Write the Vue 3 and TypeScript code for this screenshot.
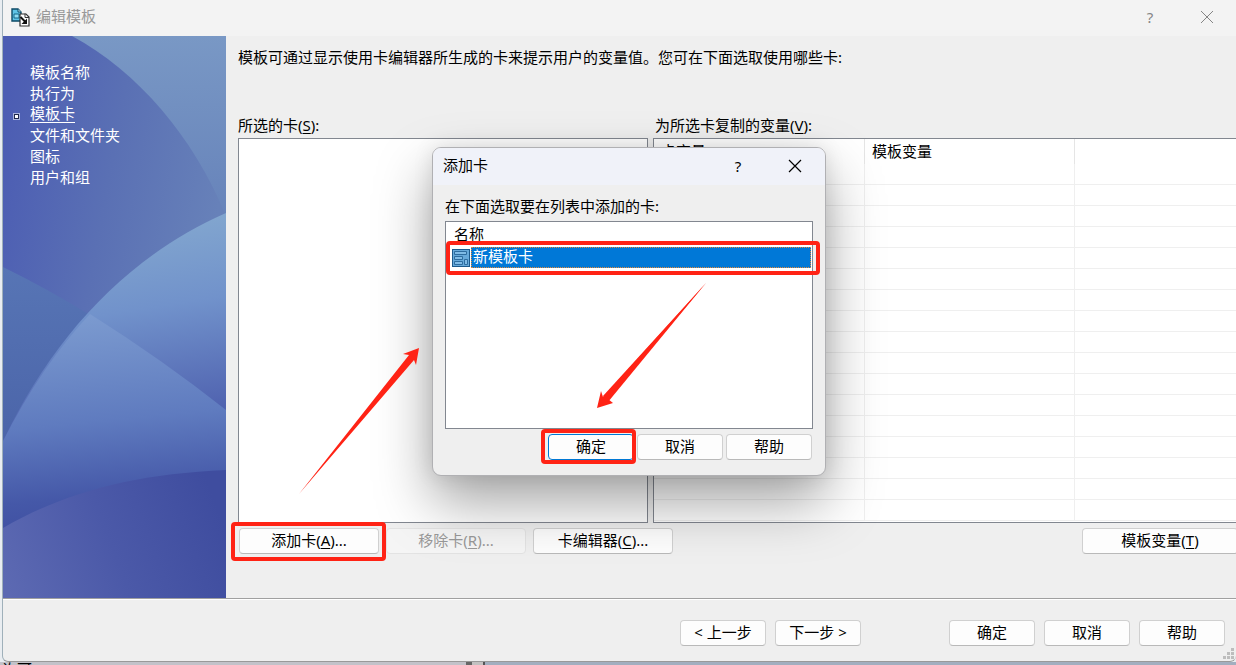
<script setup lang="ts">
interface Step {
  name: string
  current?: boolean
}

const steps: Step[] = [
  { name: '模板名称' },
  { name: '执行为' },
  { name: '模板卡', current: true },
  { name: '文件和文件夹' },
  { name: '图标' },
  { name: '用户和组' },
]

const variableRows = 17
</script>

<template>
  <div class="desktop">
    <section class="window" aria-label="编辑模板">
      <header class="titlebar">
        <svg class="app-icon" width="19" height="19" viewBox="0 0 19 19" aria-hidden="true">
          <path d="M1 1h6l3 3v9H1z" fill="#5fc3e6" stroke="#0d4a66" stroke-width="1.4" />
          <path d="M7 1v3h3" fill="#c9eefa" stroke="#0d4a66" />
          <path d="M3 6h5v4H3z" fill="#8fdcf2" stroke="#15678a" />
          <path d="M9 6h6l3 3v9H9z" fill="#fff" stroke="#333" stroke-width="1.2" />
          <path d="M14 5.500v4h4" fill="none" stroke="#333" />
          <path d="M9.500 9l5 5" stroke="#111" stroke-width="2" />
          <path d="M16 10.500V16h-5.500z" fill="#111" />
        </svg>
        <h1 class="title">编辑模板</h1>
        <button class="chrome" type="button" aria-label="帮助">?</button>
        <button class="chrome" type="button" aria-label="关闭">
          <svg width="14" height="14" viewBox="0 0 14 14"><path d="M1 1l12 12M13 1L1 13" stroke="currentColor" fill="none" /></svg>
        </button>
      </header>

      <div class="main">
        <nav class="sidebar">
          <svg class="art" viewBox="0 0 223 562" preserveAspectRatio="none" aria-hidden="true">
            <defs>
              <linearGradient id="sky" x1="0" y1="0" x2="0" y2="1">
                <stop offset="0" stop-color="#7998c5" />
                <stop offset="0.350" stop-color="#6581b9" />
              </linearGradient>
              <linearGradient id="disc" gradientUnits="userSpaceOnUse" x1="0" y1="90" x2="223" y2="130">
                <stop offset="0" stop-color="#4c5db3" />
                <stop offset="0.500" stop-color="#5a70b4" />
                <stop offset="1" stop-color="#6781b9" />
              </linearGradient>
              <linearGradient id="wedge" x1="0" y1="0" x2="0" y2="1">
                <stop offset="0" stop-color="#5775b5" />
                <stop offset="1" stop-color="#4a63a8" />
              </linearGradient>
              <linearGradient id="hill" gradientUnits="userSpaceOnUse" x1="160" y1="180" x2="190" y2="375">
                <stop offset="0" stop-color="#83a7cf" />
                <stop offset="0.450" stop-color="#7192cb" />
                <stop offset="1" stop-color="#5063b0" />
              </linearGradient>
              <linearGradient id="slope" gradientUnits="userSpaceOnUse" x1="90" y1="280" x2="110" y2="490">
                <stop offset="0" stop-color="#7b9acf" />
                <stop offset="0.500" stop-color="#5f7bbf" />
                <stop offset="0.850" stop-color="#4558a8" />
                <stop offset="1" stop-color="#4050a2" />
              </linearGradient>
              <linearGradient id="base" gradientUnits="userSpaceOnUse" x1="0" y1="540" x2="210" y2="460">
                <stop offset="0" stop-color="#5c69b2" />
                <stop offset="0.500" stop-color="#4b59a8" />
                <stop offset="1" stop-color="#3f4d9f" />
              </linearGradient>
            </defs>
            <rect width="223" height="562" fill="url(#sky)" />
            <path d="M0 0h69C135 36 190 100 223 180v222H0z" fill="url(#disc)" />
            <path d="M0 231Q43 252 87 279V420H0z" fill="url(#wedge)" />
            <path d="M223 177C125 220 50 300 0 405v157h223z" fill="url(#hill)" />
            <path d="M87 278Q160 324 223 374v188H0V405Q38 330 87 278z" fill="url(#slope)" />
            <path d="M0 492C60 457 130 438 223 434v128H0z" fill="url(#base)" />
          </svg>
          <ul class="steps">
            <li v-for="step in steps" :key="step.name" :class="{ current: step.current }">
              <a href="#" :aria-current="step.current ? 'step' : undefined">{{ step.name }}</a>
            </li>
          </ul>
        </nav>

        <div class="content">
          <p class="intro">模板可通过显示使用卡编辑器所生成的卡来提示用户的变量值。您可在下面选取使用哪些卡:</p>
          <div class="panes">
            <div class="pane cards">
              <label class="label" for="cards">所选的卡(<u>S</u>):</label>
              <select id="cards" class="box" size="2"></select>
              <div class="actions">
                <span class="marked add"><button class="btn" type="button">添加卡(<u>A</u>)...</button></span>
                <button class="btn" type="button" disabled>移除卡(<u>R</u>)...</button>
                <button class="btn" type="button">卡编辑器(<u>C</u>)...</button>
              </div>
            </div>
            <div class="pane variables">
              <span id="vars" class="label">为所选卡复制的变量(<u>V</u>):</span>
              <div class="box">
                <table class="grid" aria-labelledby="vars">
                  <colgroup><col class="first" /><col class="second" /><col /></colgroup>
                  <thead>
                    <tr><th>卡变量</th><th>模板变量</th><th></th></tr>
                  </thead>
                  <tbody>
                    <tr v-for="row in variableRows" :key="row"><td></td><td></td><td></td></tr>
                  </tbody>
                </table>
              </div>
              <div class="actions end">
                <button class="btn" type="button">模板变量(<u>T</u>)</button>
              </div>
            </div>
          </div>
        </div>
      </div>

      <footer class="footer">
        <div class="group">
          <button class="btn" type="button">&lt; 上一步</button>
          <button class="btn" type="button">下一步 &gt;</button>
        </div>
        <div class="group">
          <button class="btn" type="button">确定</button>
          <button class="btn" type="button">取消</button>
          <button class="btn" type="button">帮助</button>
        </div>
        <svg class="grip" width="12" height="12" viewBox="0 0 12 12" aria-hidden="true">
          <path d="M8 0h3v3H8zM4 4h3v3H4zM8 4h3v3H8zM0 8h3v3H0zM4 8h3v3H4zM8 8h3v3H8z" fill="#bdbdbd" />
        </svg>
      </footer>
    </section>
    <div class="behind">许可</div>

    <section class="dialog" role="dialog" aria-labelledby="dialog-title">
      <header class="dialog-title">
        <h2 id="dialog-title" class="title">添加卡</h2>
        <button class="chrome" type="button" aria-label="帮助">?</button>
        <button class="chrome" type="button" aria-label="关闭">
          <svg width="14" height="14" viewBox="0 0 14 14"><path d="M1 1l12 12M13 1L1 13" stroke="currentColor" fill="none" stroke-width="1.200" /></svg>
        </button>
      </header>
      <div class="dialog-body">
        <p id="pick">在下面选取要在列表中添加的卡:</p>
        <div class="box list">
          <table aria-labelledby="pick">
            <thead>
              <tr><th>名称</th></tr>
            </thead>
            <tbody>
              <tr>
                <td>
                  <div class="marked row">
                    <svg width="18" height="18" viewBox="0 0 18 18" aria-hidden="true">
                      <rect x="0.500" y="0.500" width="17" height="17" fill="#66a9da" stroke="#1c5a8c" />
                      <path d="M2.500 2.500h12v3h-12zM2.500 7.500h8v3h-8zM2.500 12.500h8v3h-8zM12.500 10.500h3v5h-3z" fill="#7fbbe6" stroke="#2d6c9f" />
                    </svg>
                    <span class="name">新模板卡</span>
                  </div>
                </td>
              </tr>
            </tbody>
          </table>
        </div>
        <div class="dialog-actions">
          <span class="marked ok"><button class="btn default" type="button">确定</button></span>
          <button class="btn" type="button">取消</button>
          <button class="btn" type="button">帮助</button>
        </div>
      </div>
      <svg class="arrow down" width="110" height="126" viewBox="0 0 110 126" aria-hidden="true">
        <path d="M109 0L11 116l5 4-16 5 4-17 2 6z" fill="#ff2315" />
        <path d="M109 0L6 113l5 6z" fill="#ff2315" />
      </svg>
    </section>
    <svg class="arrow up" width="122" height="147" viewBox="0 0 122 147" aria-hidden="true">
      <path d="M1 146L111 7l-6-1 16-6-3 17-2-5z" fill="#ff2315" />
    </svg>
  </div>
</template>

<style>
body {
  margin: 0;
}
</style>

<style scoped>
*,
*::before,
*::after {
  box-sizing: border-box;
}

.desktop {
  position: relative;
  display: flex;
  flex-direction: column;
  min-height: 100vh;
  overflow: hidden;
  background: #e9edf1;
  color: #000;
  font: 15px/20px "Noto Sans", "Noto Sans CJK SC", sans-serif;
}

button,
select {
  font: inherit;
  color: inherit;
}

h1,
h2,
p,
ul {
  margin: 0;
  padding: 0;
  font-size: 15px;
  font-weight: 400;
}

.window {
  display: flex;
  flex: 1;
  flex-direction: column;
  margin-left: 2px;
  border-left: 1px solid #9fb0ba;
  border-bottom: 1px solid #999;
  border-radius: 0 0 6px 6px;
  background: #efefef;
}

.titlebar {
  display: flex;
  align-items: center;
  height: 36px;
  padding: 0 8px;
  background: #f3f3f3;
  color: #999;
}

.app-icon {
  margin-bottom: 2px;
}

.title {
  flex: 1;
  padding-bottom: 4px;
}

.titlebar .title {
  margin-left: 6px;
}

.chrome {
  display: flex;
  align-items: center;
  justify-content: center;
  width: 42px;
  height: 36px;
  margin-left: 15px;
  padding: 0 0 2px;
  border: 0;
  background: none;
}

.titlebar .chrome {
  color: #858585;
}

.main {
  display: flex;
  flex: 1;
}

.sidebar {
  position: relative;
  flex: none;
  width: 223px;
}

.art {
  position: absolute;
  inset: 0;
  width: 100%;
  height: 100%;
}

.steps {
  position: relative;
  padding: 25px 0 0 10px;
  list-style: none;
}

.steps li {
  display: flex;
  align-items: center;
  height: 21px;
  padding-left: 17px;
}

.steps .current {
  padding-left: 0;
}

.current::before {
  content: "";
  width: 7px;
  height: 7px;
  margin: 6px 10px 0 0;
  border: 2px solid #20284c;
  outline: 1px solid #a9b3dc;
  outline-offset: -1px;
  background: #fff;
}

.steps a {
  color: #fff;
  text-decoration: none;
}

.steps .current a {
  border-bottom: 1px solid #fff;
  line-height: 18px;
}

.content {
  display: flex;
  flex: 1;
  flex-direction: column;
  gap: 48px;
  min-width: 0;
  padding: 11px 0 44px 12px;
  overflow: hidden;
}

.panes {
  display: flex;
  flex: 1;
  gap: 5px;
}

.pane {
  display: flex;
  flex-direction: column;
}

.cards {
  flex: none;
  width: 410px;
}

.variables {
  flex: 1;
  min-width: 0;
  margin-right: -2px;
}

.variables .label {
  padding-left: 2px;
}

.box {
  border: 1px solid #828790;
  border-radius: 0;
  background: #fff;
}

.pane .box {
  flex: 1;
  margin: 3px 0 5px;
}

.actions {
  display: flex;
  gap: 7px;
  padding-left: 1px;
}

.actions .btn {
  flex: none;
  width: 140px;
}

.actions.end {
  justify-content: flex-end;
}

.actions.end .btn {
  width: 156px;
}

.btn {
  display: block;
  width: 86px;
  height: 26px;
  padding: 0 0 2px;
  border: 1px solid #d0d0d0;
  border-bottom-color: #b9b9b9;
  border-radius: 4px;
  background: #fdfdfd;
  line-height: 20px;
  text-align: center;
  white-space: nowrap;
}

.btn:disabled {
  border-color: #e3e3e3;
  background: #f5f5f5;
  color: #999;
}

.btn.default {
  border-color: #0078d4;
}

u {
  text-decoration: underline;
  text-underline-offset: 2px;
}

table {
  width: 100%;
  border-collapse: separate;
  border-spacing: 0;
  table-layout: fixed;
}

th {
  height: 25px;
  padding: 0 0 2px 8px;
  font-weight: 400;
  text-align: left;
}

.grid th {
  padding-left: 7px;
  border-right: 1px solid #e5e5e5;
}

.grid td {
  height: 21px;
  padding: 0;
  border-right: 1px solid #efefef;
  border-bottom: 1px solid #efefef;
}

.first {
  width: 211px;
}

.second {
  width: 210px;
}

.footer {
  position: relative;
  display: flex;
  justify-content: flex-end;
  gap: 88px;
  padding: 21px 11px 15px 0;
  border-top: 1px solid #a0a0a0;
  box-shadow: inset 0 1px #fff;
}

.group {
  display: flex;
  gap: 9px;
}

.grip {
  position: absolute;
  right: 1px;
  bottom: 1px;
}

.behind {
  height: 3px;
  padding-left: 2px;
  overflow: hidden;
  background: linear-gradient(90deg, #c2c2c9 466px, #666 466px 472px, #c3c1c1 472px 483px, #555 483px 485px, #a2aebf 485px);
  line-height: 14px;
}

.dialog {
  position: absolute;
  left: 432px;
  top: 147px;
  width: 394px;
  border: 1px solid #b0b0b3;
  border-radius: 9px;
  background: #efefef;
  box-shadow: 0 26px 56px rgba(0, 0, 0, 0.36), 0 0 20px rgba(0, 0, 0, 0.1);
}

.dialog-title {
  display: flex;
  align-items: center;
  height: 37px;
  padding: 0 9px 0 10px;
  border-radius: 8px 8px 0 0;
  background: #f0f2f9;
}

.dialog-body {
  padding: 11px 12px 15px;
}

.list {
  height: 208px;
  margin: 5px 0;
}

.list td {
  padding: 0;
}

.row {
  display: flex;
  align-items: center;
  gap: 1px;
  height: 21px;
  padding: 0 1px 0 6px;
}

.name {
  flex: 1;
  height: 21px;
  padding-left: 2px;
  outline: 1px dotted #e08a3c;
  outline-offset: -1px;
  background: #0078d7;
  color: #fff;
  line-height: 19px;
}

.dialog-actions {
  display: flex;
  justify-content: flex-end;
  gap: 3px;
  padding-right: 1px;
}

.marked {
  position: relative;
}

.marked::after {
  content: "";
  position: absolute;
  border: 4px solid #ff2315;
  border-radius: 4px;
  pointer-events: none;
}

.add::after {
  inset: -6px -7px -7px -8px;
}

.row::after {
  inset: -6px -8px -7px 0;
}

.ok::after {
  inset: -5px -2px -4px -7px;
}

.arrow {
  position: absolute;
  pointer-events: none;
}

.arrow.down {
  left: 164px;
  top: 135px;
}

.arrow.up {
  left: 298px;
  top: 348px;
}
</style>
